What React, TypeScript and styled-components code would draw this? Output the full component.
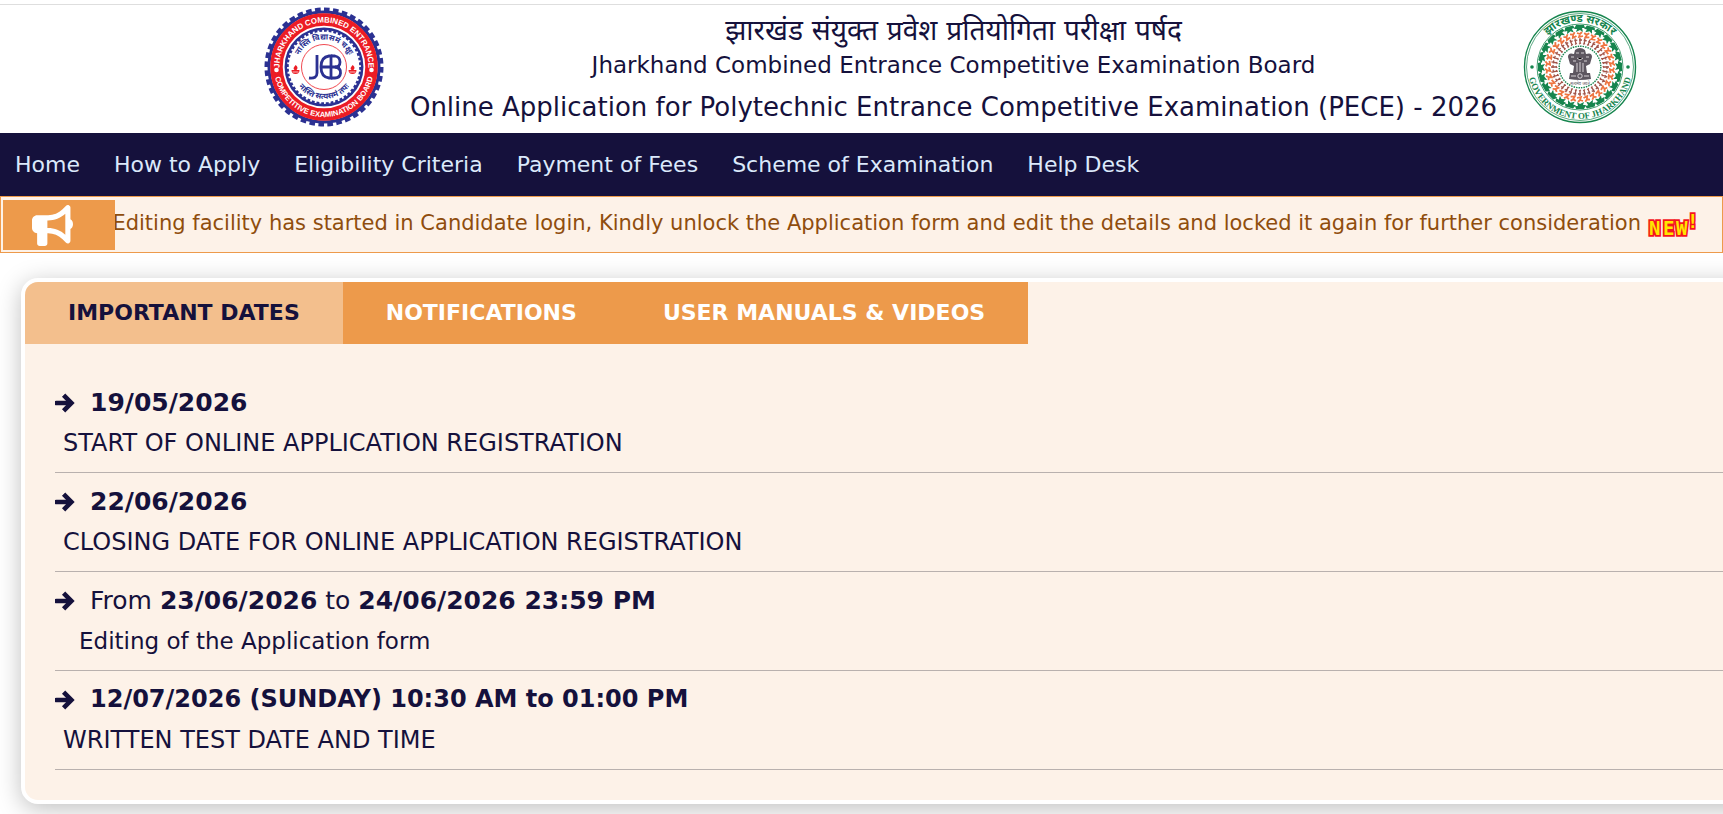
import React, { useState } from 'react';
import styled, { createGlobalStyle } from 'styled-components';
import { FaBullhorn } from 'react-icons/fa6';

const navy = '#15113c';
const orange = '#ed9a4b';
const cream = '#fdf2e8';

const GlobalStyle = createGlobalStyle`
  *, *::before, *::after { box-sizing: border-box; }
  body {
    margin: 0;
    overflow-x: hidden;
    background: #fff;
    color: ${navy};
    font-family: "DejaVu Sans", Verdana, "Noto Sans", sans-serif;
  }
`;

const Page = styled.div`
  padding-top: 4px;
  overflow: hidden;
`;

const Header = styled.header`
  display: flex;
  justify-content: center;
  align-items: flex-start;
  gap: 26px;
  padding: 2px 0 1px 178px;
  border-top: 1px solid #dedede;
`;

const BoardLogo = styled.svg`
  flex: none;
  width: 120px;
  height: 120px;
`;

const StateLogo = styled.svg`
  flex: none;
  width: 114px;
  height: 120px;
`;

const Titles = styled.div`
  flex: none;
  text-align: center;
  white-space: nowrap;
`;

const HindiTitle = styled.p`
  margin: 0;
  padding-top: 7px;
  font-size: 28px;
  line-height: 34px;
`;

const BoardName = styled.p`
  margin: 0;
  font-size: 23px;
  line-height: 34px;
`;

const ExamTitle = styled.h1`
  margin: 0;
  font-size: 26px;
  font-weight: 400;
  line-height: 50px;
`;

const Nav = styled.nav`
  display: flex;
  gap: 34px;
  padding: 0 15px;
  background: ${navy};
`;

const NavLink = styled.a`
  color: #dbe9fb;
  font-size: 22px;
  line-height: 63px;
  text-decoration: none;
  white-space: nowrap;
`;

const Ticker = styled.section`
  display: flex;
  padding: 3px 0 2px 2px;
  height: 57px;
  border: 1px solid ${orange};
  background: ${cream};
`;

const TickerIcon = styled.div`
  position: relative;
  z-index: 1;
  flex: none;
  display: flex;
  align-items: center;
  width: 112px;
  height: 50px;
  padding-left: 29px;
  background: ${orange};
  color: #fff;
`;

const TickerTrack = styled.div`
  flex: 1;
  min-width: 0;
  display: flex;
  justify-content: flex-end;
  gap: 6px;
  padding-right: 25px;
  color: #8f4d0d;
  font-size: 21px;
  line-height: 46px;
  white-space: nowrap;
`;

const NewBadge = styled.svg`
  flex: none;
  align-self: center;
  width: 50px;
  height: 30px;
  overflow: visible;
`;

const Card = styled.main`
  margin: 25px -60px 10px 21px;
  border: 4px solid #fff;
  border-radius: 17px;
  overflow: hidden;
  background: ${cream};
  box-shadow: 0 5px 25px rgba(0, 0, 0, 0.25);
`;

const Tabs = styled.div`
  display: flex;
`;

const Tab = styled.button<{ $active: boolean }>`
  padding: 0 43px;
  border: 0;
  background: ${p => (p.$active ? '#f3bf8d' : orange)};
  color: ${p => (p.$active ? navy : '#fff')};
  font: 700 22px/62px "DejaVu Sans", Verdana, sans-serif;
  white-space: nowrap;
  cursor: pointer;
`;

const DateList = styled.ul`
  margin: 0;
  padding: 30px;
  list-style: none;
`;

const DateItem = styled.li`
  height: 99px;
  padding-top: 8px;
  border-bottom: 1px solid #b9b1ae;
`;

const DateLine = styled.div<{ $large: boolean }>`
  display: flex;
  align-items: center;
  gap: 15px;
  font-size: ${p => (p.$large ? 25 : 24)}px;
  line-height: 41px;
`;

const Description = styled.p<{ $indented?: boolean }>`
  margin: 0;
  padding-left: ${p => (p.$indented ? 24 : 8)}px;
  font-size: ${p => (p.$indented ? 23 : 24)}px;
  line-height: 41px;
`;

const ArrowIcon = styled.svg`
  flex: none;
  width: 20px;
  height: 20px;
`;

const links = ['Home', 'How to Apply', 'Eligibility Criteria', 'Payment of Fees', 'Scheme of Examination', 'Help Desk'];
const tabs = ['IMPORTANT DATES', 'NOTIFICATIONS', 'USER MANUALS & VIDEOS'];

const dates: { when: React.ReactNode; what: string; indented?: boolean; large: boolean }[] = [
  { when: <b>19/05/2026</b>, what: 'START OF ONLINE APPLICATION REGISTRATION', large: true },
  { when: <b>22/06/2026</b>, what: 'CLOSING DATE FOR ONLINE APPLICATION REGISTRATION', large: true },
  {
    when: <>From <b>23/06/2026</b> to <b>24/06/2026 23:59 PM</b></>,
    what: 'Editing of the Application form',
    indented: true,
    large: true,
  },
  { when: <b>12/07/2026 (SUNDAY) 10:30 AM to 01:00 PM</b>, what: 'WRITTEN TEST DATE AND TIME', large: false },
];

const sealFont = '"Liberation Sans", Arial, sans-serif';
const hindiFont = '"Noto Sans", "DejaVu Sans", sans-serif';

function Arrow() {
  return (
    <ArrowIcon viewBox="0 0 20 20" fill="none" stroke="currentColor" strokeWidth="4.6" strokeLinejoin="miter" aria-hidden="true">
      <path d="M1.5 10H15" strokeLinecap="round" />
      <path d="M8.6 2.2L16.4 10L8.6 17.8" />
    </ArrowIcon>
  );
}

function BoardSeal() {
  const blue = '#2b3192';
  const red = '#ec1c24';
  return (
    <BoardLogo viewBox="-60 -60 120 120" role="img" aria-label="Jharkhand Combined Entrance Competitive Examination Board seal">
      <defs>
        <path id="b-top" d="M-44.5 0A44.5 44.5 0 0 1 44.5 0" />
        <path id="b-bottom" d="M-50 0A50 50 0 0 0 50 0" />
        <path id="b-in-top" d="M-27.5 0A27.5 27.5 0 0 1 27.5 0" />
        <path id="b-in-bottom" d="M-32 0A32 32 0 0 0 32 0" />
      </defs>
      <circle r="55" fill="#fff" stroke={blue} strokeWidth="3" />
      <circle r="57" fill="none" stroke={blue} strokeWidth="5" pathLength="320" strokeDasharray="5 3" />
      <circle r="47.5" fill="none" stroke={red} strokeWidth="12.5" />
      <circle r="38.2" fill="#fff" stroke={blue} strokeWidth="2.5" />
      <circle r="36.5" fill="none" stroke={blue} strokeWidth="2.5" pathLength="240" strokeDasharray="3 2" />
      <circle r="22.5" fill="none" stroke={red} strokeWidth="0.8" />
      <g fill="#fff" fontFamily={sealFont} fontWeight="700" textAnchor="middle">
        <text fontSize="7.9"><textPath href="#b-top" startOffset="50%">JHARKHAND COMBINED ENTRANCE</textPath></text>
        <text fontSize="7.6"><textPath href="#b-bottom" startOffset="50%">COMPETITIVE EXAMINATION BOARD</textPath></text>
      </g>
      <g fill={blue} fontFamily={hindiFont} fontWeight="700" fontSize="8" textAnchor="middle">
        <text><textPath href="#b-in-top" startOffset="50%">नास्ति विद्यासमं चक्षुः</textPath></text>
        <text><textPath href="#b-in-bottom" startOffset="50%">नास्ति सत्यसमं तपः</textPath></text>
      </g>
      <circle cx="-47.5" cy="3" r="2.3" fill="#fff" />
      <circle cx="47.5" cy="3" r="2.3" fill="#fff" />
      {[-28.5, 28.5].map(x => (
        <g key={x} transform={`translate(${x} 3)`} fill={red}>
          <path d="M0-5C3-3 2-1 1 0H4Q4 4 0 4T-4 0H-1C-3-2-1-3 0-5Z" />
          <path d="M-3 2H3" stroke="#fff" strokeWidth="0.7" />
        </g>
      ))}
      <g fill="none" stroke={blue} strokeWidth="2.8">
        <path d="M-7-12V6Q-7 12-15 11" />
        <path d="M7-11H5Q-3-10-3 0T5 11H7M-3 0H16M7-12.500V12.500" />
        <path d="M7-11H11Q16-10 16-5T11 0Q17 1 16.500 6T11 11H7" />
      </g>
    </BoardLogo>
  );
}

function StateSeal() {
  const green = '#16854e';
  return (
    <StateLogo viewBox="-57 -60 114 120" role="img" aria-label="Government of Jharkhand seal">
      <defs>
        <path id="s-top" d="M-45 0A45 45 0 0 1 45 0" />
        <path id="s-bottom" d="M-52 0A52 52 0 0 0 52 0" />
      </defs>
      <circle r="55.5" fill="#fff" stroke={green} strokeWidth="1.4" />
      <circle r="53.5" fill="none" stroke={green} strokeWidth="0.7" />
      <circle r="43" fill="none" stroke={green} strokeWidth="0.8" />
      <g fill={green} textAnchor="middle">
        <text fontFamily={hindiFont} fontSize="11" fontWeight="700">
          <textPath href="#s-top" startOffset="50%">झारखण्ड सरकार</textPath>
        </text>
        <text fontFamily={'"Liberation Serif", serif'} fontWeight="700" fontSize="9">
          <textPath href="#s-bottom" startOffset="50%">GOVERNMENT OF JHARKHAND</textPath>
        </text>
      </g>
      <circle cx="-48" cy="0" r="1.8" fill={green} />
      <circle cx="48" cy="0" r="1.8" fill={green} />
      {Array.from({ length: 24 }, (_, i) => (
        <path
          key={i}
          transform={`rotate(${i * 15})`}
          d="M-4-42H4L5-39H2L3-35L0-37L-4-35L-3-38L-6-38Z"
          fill={green}
        />
      ))}
      {Array.from({ length: 30 }, (_, i) => (
        <path
          key={i}
          transform={`rotate(${i * 12})`}
          d="M-3-34L0-33L2-35M0-33L-1-30L3-31"
          fill="none"
          stroke="#ee7541"
          strokeWidth="1.8"
        />
      ))}
      {Array.from({ length: 36 }, (_, i) => (
        <path
          key={i}
          transform={`rotate(${i * 10})`}
          d="M0-29V-23M-1-27H2M-1-23L1-24"
          fill="none"
          stroke="#a15448"
          strokeWidth="1.3"
        />
      ))}
      <circle r="20.8" fill="none" stroke={green} strokeWidth="1.4" strokeDasharray="1.5 1" />
      <g fill="#5d5660">
        <path d="M-5-17Q0-21 5-17L6-13Q12-15 12-10L10-3L6-1L7 6H-7L-6-1L-10-3L-12-10Q-12-15-6-13Z" />
        <path d="M-10 6H10L11 12Q0 14-11 12Z" />
      </g>
      <path d="M-4-14H-1M1-14H4M-9-10H-6M6-10H9M-3-9L0-7L3-9M-7-6H-4M4-6H7M-3-4V5M0-5V5M3-4V5M-9 9H-4M4 9H9" stroke="#d8d2d6" strokeWidth="1" />
      <circle cy="9" r="2.2" fill="#5d5660" stroke="#e4dfe2" strokeWidth="0.9" />
      <text y="18" textAnchor="middle" fontFamily={hindiFont} fontSize="4" fill="#5d5660">सत्यमेव जयते</text>
    </StateLogo>
  );
}

export default function App() {
  const [active, setActive] = useState(0);
  return (
    <Page>
      <GlobalStyle />
      <Header>
        <BoardSeal />
        <Titles>
          <HindiTitle lang="hi">झारखंड संयुक्त प्रवेश प्रतियोगिता परीक्षा पर्षद</HindiTitle>
          <BoardName>Jharkhand Combined Entrance Competitive Examination Board</BoardName>
          <ExamTitle>Online Application for Polytechnic Entrance Competitive Examination (PECE) - 2026</ExamTitle>
        </Titles>
        <StateSeal />
      </Header>
      <Nav>
        {links.map(label => (
          <NavLink key={label} href="#">{label}</NavLink>
        ))}
      </Nav>
      <Ticker>
        <TickerIcon><FaBullhorn size={41} /></TickerIcon>
        <TickerTrack>
          <span>
            Editing facility has started in Candidate login, Kindly unlock the Application form and edit the details and locked it again for further consideration
          </span>
          <NewBadge viewBox="0 0 50 30">
            <g
              fill="#ffe600"
              stroke="#f5151d"
              strokeWidth="3.4"
              strokeLinejoin="miter"
              paintOrder="stroke"
              fontFamily={'"DejaVu Sans Mono", monospace'}
              fontWeight="700"
              fontSize="19"
            >
              <text x="2" y="25">N</text>
              <text x="16" y="25">E</text>
              <text x="29" y="25">W</text>
              <text x="40" y="18">!</text>
            </g>
          </NewBadge>
        </TickerTrack>
      </Ticker>
      <Card>
        <Tabs role="tablist">
          {tabs.map((label, i) => (
            <Tab key={label} role="tab" aria-selected={i === active} $active={i === active} onClick={() => setActive(i)}>
              {label}
            </Tab>
          ))}
        </Tabs>
        <DateList>
          {dates.map(d => (
            <DateItem key={d.what}>
              <DateLine $large={d.large}>
                <Arrow />
                <span>{d.when}</span>
              </DateLine>
              <Description $indented={d.indented}>{d.what}</Description>
            </DateItem>
          ))}
        </DateList>
      </Card>
    </Page>
  );
}
